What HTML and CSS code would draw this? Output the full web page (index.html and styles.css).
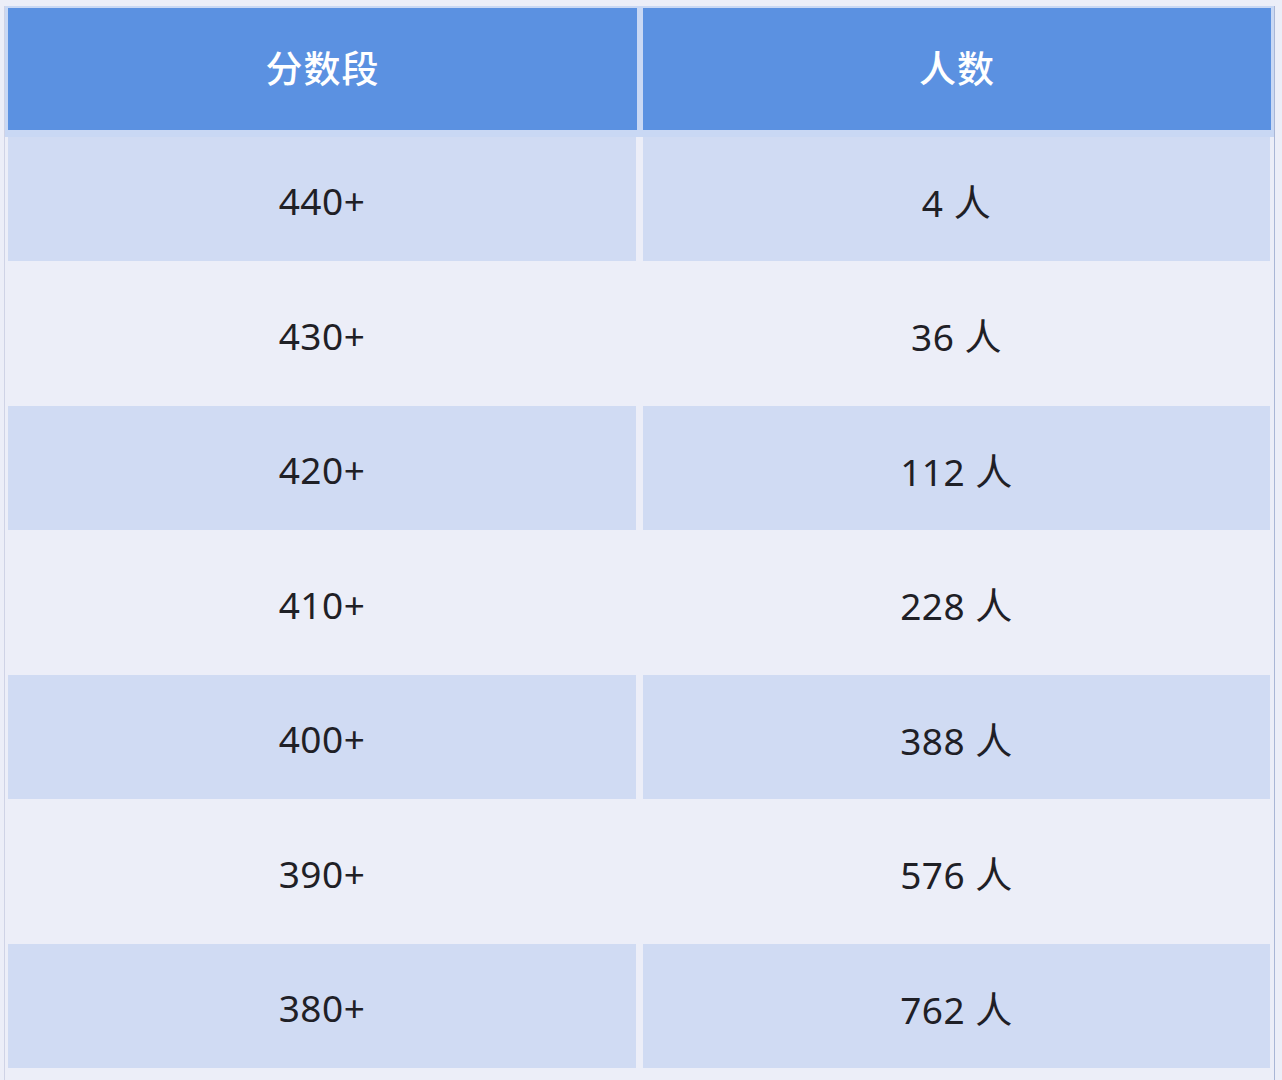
FILE: index.html
```html
<!DOCTYPE html>
<html lang="zh">
<head>
<meta charset="utf-8">
<link rel="stylesheet" href="styles.css">
</head>
<body>
<div class="frame">
  <div class="table">
    <div class="head">
      <div class="hcell">分数段</div>
      <div class="hcell">人数</div>
    </div>
    <div class="row odd"><div class="cell">440+</div><div class="cell">4 人</div></div>
    <div class="row even"><div class="cell">430+</div><div class="cell">36 人</div></div>
    <div class="row odd"><div class="cell">420+</div><div class="cell">112 人</div></div>
    <div class="row even"><div class="cell">410+</div><div class="cell">228 人</div></div>
    <div class="row odd"><div class="cell">400+</div><div class="cell">388 人</div></div>
    <div class="row even"><div class="cell">390+</div><div class="cell">576 人</div></div>
    <div class="row odd"><div class="cell">380+</div><div class="cell">762 人</div></div>
  </div>
</div>
</body>
</html>
```

FILE: styles.css
```css
html, body {
  margin: 0;
  padding: 0;
  background: #eceef8;
}
body {
  width: 1282px;
  height: 1080px;
  overflow: hidden;
  font-family: "Noto Sans", "Noto Sans CJK SC", sans-serif;
}
.frame {
  padding: 6px 0 0 4px;
}
.table {
  width: 1269px;
  border-left: 1px solid #cfd3e6;
  border-right: 1px solid #a9b6d6;
  padding-bottom: 14px;
}
.head {
  display: grid;
  grid-template-columns: 629px 628px;
  column-gap: 6px;
  background: #c9d8f4;
  padding: 2px 3px 7px 3px;
}
.hcell {
  height: 122px;
  box-sizing: border-box;
  padding-bottom: 4px;
  background: #5b91e1;
  color: #ffffff;
  font-family: "Noto Sans CJK SC", sans-serif;
  font-size: 37px;
  font-weight: 500;
  display: flex;
  align-items: center;
  justify-content: center;
  letter-spacing: 1px;
}
.row {
  display: grid;
  grid-template-columns: 628px 627px;
  column-gap: 7px;
  padding-left: 3px;
}
.row.odd { height: 124px; }
.row.even { height: 145px; }
.cell {
  display: flex;
  align-items: center;
  justify-content: center;
  box-sizing: border-box;
  padding-top: 3px;
  font-size: 37px;
  font-weight: 400;
  color: #1f2026;
  letter-spacing: 0.5px;
}
.row.odd .cell {
  background: #d0dbf3;
}
```
